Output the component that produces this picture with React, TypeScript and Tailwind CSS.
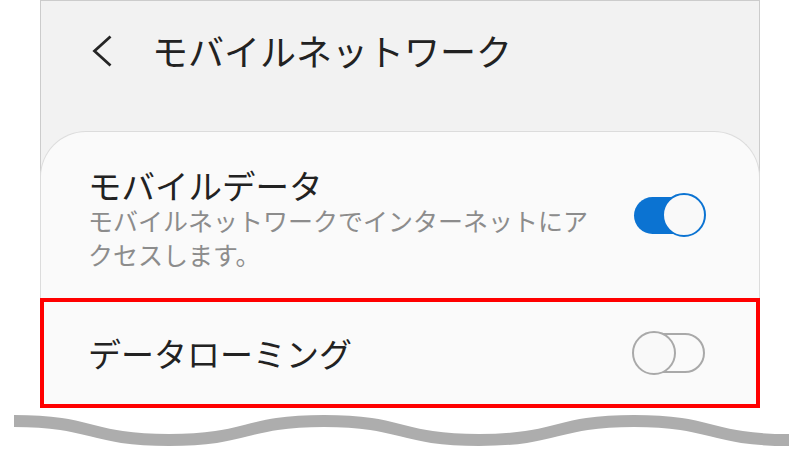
import React from "react";

function Toggle({ on }: { on: boolean }) {
  return (
    <div className="relative w-[74px] h-[44px] shrink-0">
      <div
        className={
          on
            ? "absolute left-[2px] top-[4px] w-[66px] h-[37px] rounded-full bg-[#0b73d2]"
            : "absolute left-[2px] top-[2px] w-[71px] h-[40px] rounded-full border-2 border-[#a9a9a9] bg-[#fafafa]"
        }
      />
      <div
        className={
          on
            ? "absolute right-0 top-0 w-[44px] h-[44px] rounded-full border-2 border-[#0b73d2] bg-[#f9f9f9]"
            : "absolute left-0 top-0 w-[44px] h-[44px] rounded-full border-2 border-[#a9a9a9] bg-[#f9f9f9]"
        }
      />
    </div>
  );
}

export default function App() {
  return (
    <div className="w-[800px] h-[460px] bg-white overflow-hidden font-['Noto_Sans_CJK_JP','Noto_Sans',sans-serif]">
      <div className="ml-[40px] w-[720px] border-x border-t border-[#cccccc] bg-[#f2f2f2]">
        <div className="h-[130px] flex items-start pt-[27px]">
          <svg
            className="ml-[51px] mt-[7px] shrink-0"
            width="20"
            height="32"
            viewBox="0 0 20 32"
          >
            <polyline
              points="18.5,1.5 2.5,16 18.5,30.5"
              fill="none"
              stroke="#252525"
              strokeWidth="2.8"
            />
          </svg>
          <span className="ml-[40px] text-[36px] leading-[44px] text-[#222222] whitespace-nowrap">
            モバイルネットワーク
          </span>
        </div>
        <div className="-mx-px rounded-t-[46px] border-x border-t border-[#dcdcdc] bg-[#fafafa]">
          <div className="h-[166px] flex items-start justify-between pl-[47px] pr-[53px]">
            <div className="pt-[34px] w-[515px]">
              <div className="text-[33.5px] leading-[37px] text-[#222222]">モバイルデータ</div>
              <div className="text-[25px] leading-[34px] text-[#8c8c8c]">
                モバイルネットワークでインターネットにアクセスします。
              </div>
            </div>
            <div className="self-center">
              <Toggle on={true} />
            </div>
          </div>
          <div className="-mx-px h-[110px] border-4 border-[#ff0000] flex items-center justify-between pl-[44px] pr-[50px]">
            <span className="text-[33px] leading-[44px] text-[#222222]">データローミング</span>
            <Toggle on={false} />
          </div>
        </div>
      </div>
      <svg width="800" height="52" viewBox="0 0 800 52" className="block">
        <path
          d="M14 13 C 95 13, 88 32, 169 32 S 243 13, 324 13 S 398 32, 479 32 S 553 13, 634 13 S 708 32, 789 32"
          fill="none"
          stroke="#adadad"
          strokeWidth="12"
        />
      </svg>
    </div>
  );
}
